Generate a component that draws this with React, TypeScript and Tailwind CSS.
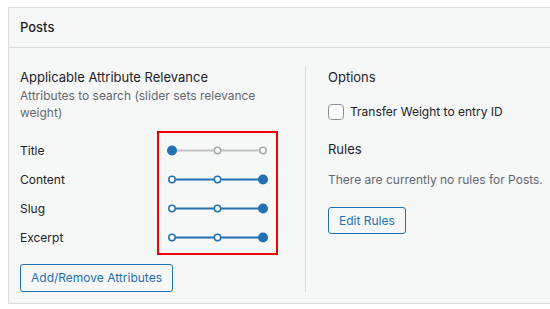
import React from 'react';

const font = { fontFamily: 'Inter, "Noto Sans", sans-serif' };

type SliderProps = { value: 0 | 1 | 2 };

// three-stop relevance slider, drawn as svg
function Slider({ value }: SliderProps) {
  const xs = [6, 51.5, 97];
  const blue = '#2271b1';
  const gray = '#a7aaad';
  const active = value > 0;
  return (
    <svg width="103" height="19" viewBox="0 0 103 19">
      <line x1={xs[0]} y1="9.5" x2={xs[value]} y2="9.5" stroke={blue} strokeWidth="2" />
      <line x1={xs[value]} y1="9.5" x2={xs[2]} y2="9.5" stroke="#c3c4c7" strokeWidth="2" />
      {xs.map((x, i) =>
        i === value ? (
          <circle key={i} cx={x} cy="9.5" r="5" fill={blue} />
        ) : (
          <circle
            key={i}
            cx={x}
            cy="9.5"
            r="3.2"
            fill="#fff"
            stroke={active ? blue : gray}
            strokeWidth="1.5"
          />
        )
      )}
    </svg>
  );
}

const rows: { label: string; value: 0 | 1 | 2 }[] = [
  { label: 'Title', value: 0 },
  { label: 'Content', value: 2 },
  { label: 'Slug', value: 2 },
  { label: 'Excerpt', value: 2 },
];

export default function App() {
  return (
    <div className="w-[550px] h-[309px] bg-white pt-[7px] pl-[8px] overflow-hidden" style={font}>
      <div className="w-[560px] border border-[#dcdcde] bg-[#f6f7f7] text-[#1d2327]">
        <div className="h-[40px] flex items-center px-[11px] border-b border-[#dcdcde] text-[13px] font-medium">
          Posts
        </div>
        <div className="flex pt-[20px] pb-[11px] pl-[11px]">
          <div className="w-[285px]">
            <div className="text-[13px] leading-[19px]">Applicable Attribute Relevance</div>
            <div className="text-[12px] leading-[17px] text-[#646970] pr-[20px]">
              Attributes to search (slider sets relevance weight)
            </div>
            <div className="flex items-start mt-[10px]">
              <div className="w-[137px] pt-[5px] text-[12px]">
                {rows.map((r) => (
                  <div key={r.label} className="h-[29px] flex items-center">
                    {r.label}
                  </div>
                ))}
              </div>
              <div className="border-2 border-[#ee0000] px-[7px] pt-[3px] pb-[1px]">
                {rows.map((r) => (
                  <div key={r.label} className="h-[29px] flex items-center">
                    <Slider value={r.value} />
                  </div>
                ))}
              </div>
            </div>
            <button className="mt-[9px] h-[28px] px-[10px] rounded-[3px] border border-[#2271b1] text-[#2271b1] text-[12px] bg-[#f6f7f7]">
              Add/Remove Attributes
            </button>
          </div>
          <div className="w-px bg-[#dcdcde] mt-[-2px]" />
          <div className="pl-[22px]">
            <div className="text-[13px] leading-[19px]">Options</div>
            <label className="flex items-center gap-[6px] mt-[17px] h-[16px] text-[12px]">
              <span className="w-[16px] h-[16px] rounded-[4px] border border-[#8c8f94] bg-white" />
              Transfer Weight to entry ID
            </label>
            <div className="text-[13px] leading-[19px] mt-[20px]">Rules</div>
            <div className="text-[12px] leading-[17px] text-[#646970] mt-[12px]">
              There are currently no rules for Posts.
            </div>
            <button className="mt-[19px] h-[27px] px-[10px] rounded-[3px] border border-[#2271b1] text-[#2271b1] text-[12px] bg-[#f6f7f7]">
              Edit Rules
            </button>
          </div>
        </div>
      </div>
    </div>
  );
}
